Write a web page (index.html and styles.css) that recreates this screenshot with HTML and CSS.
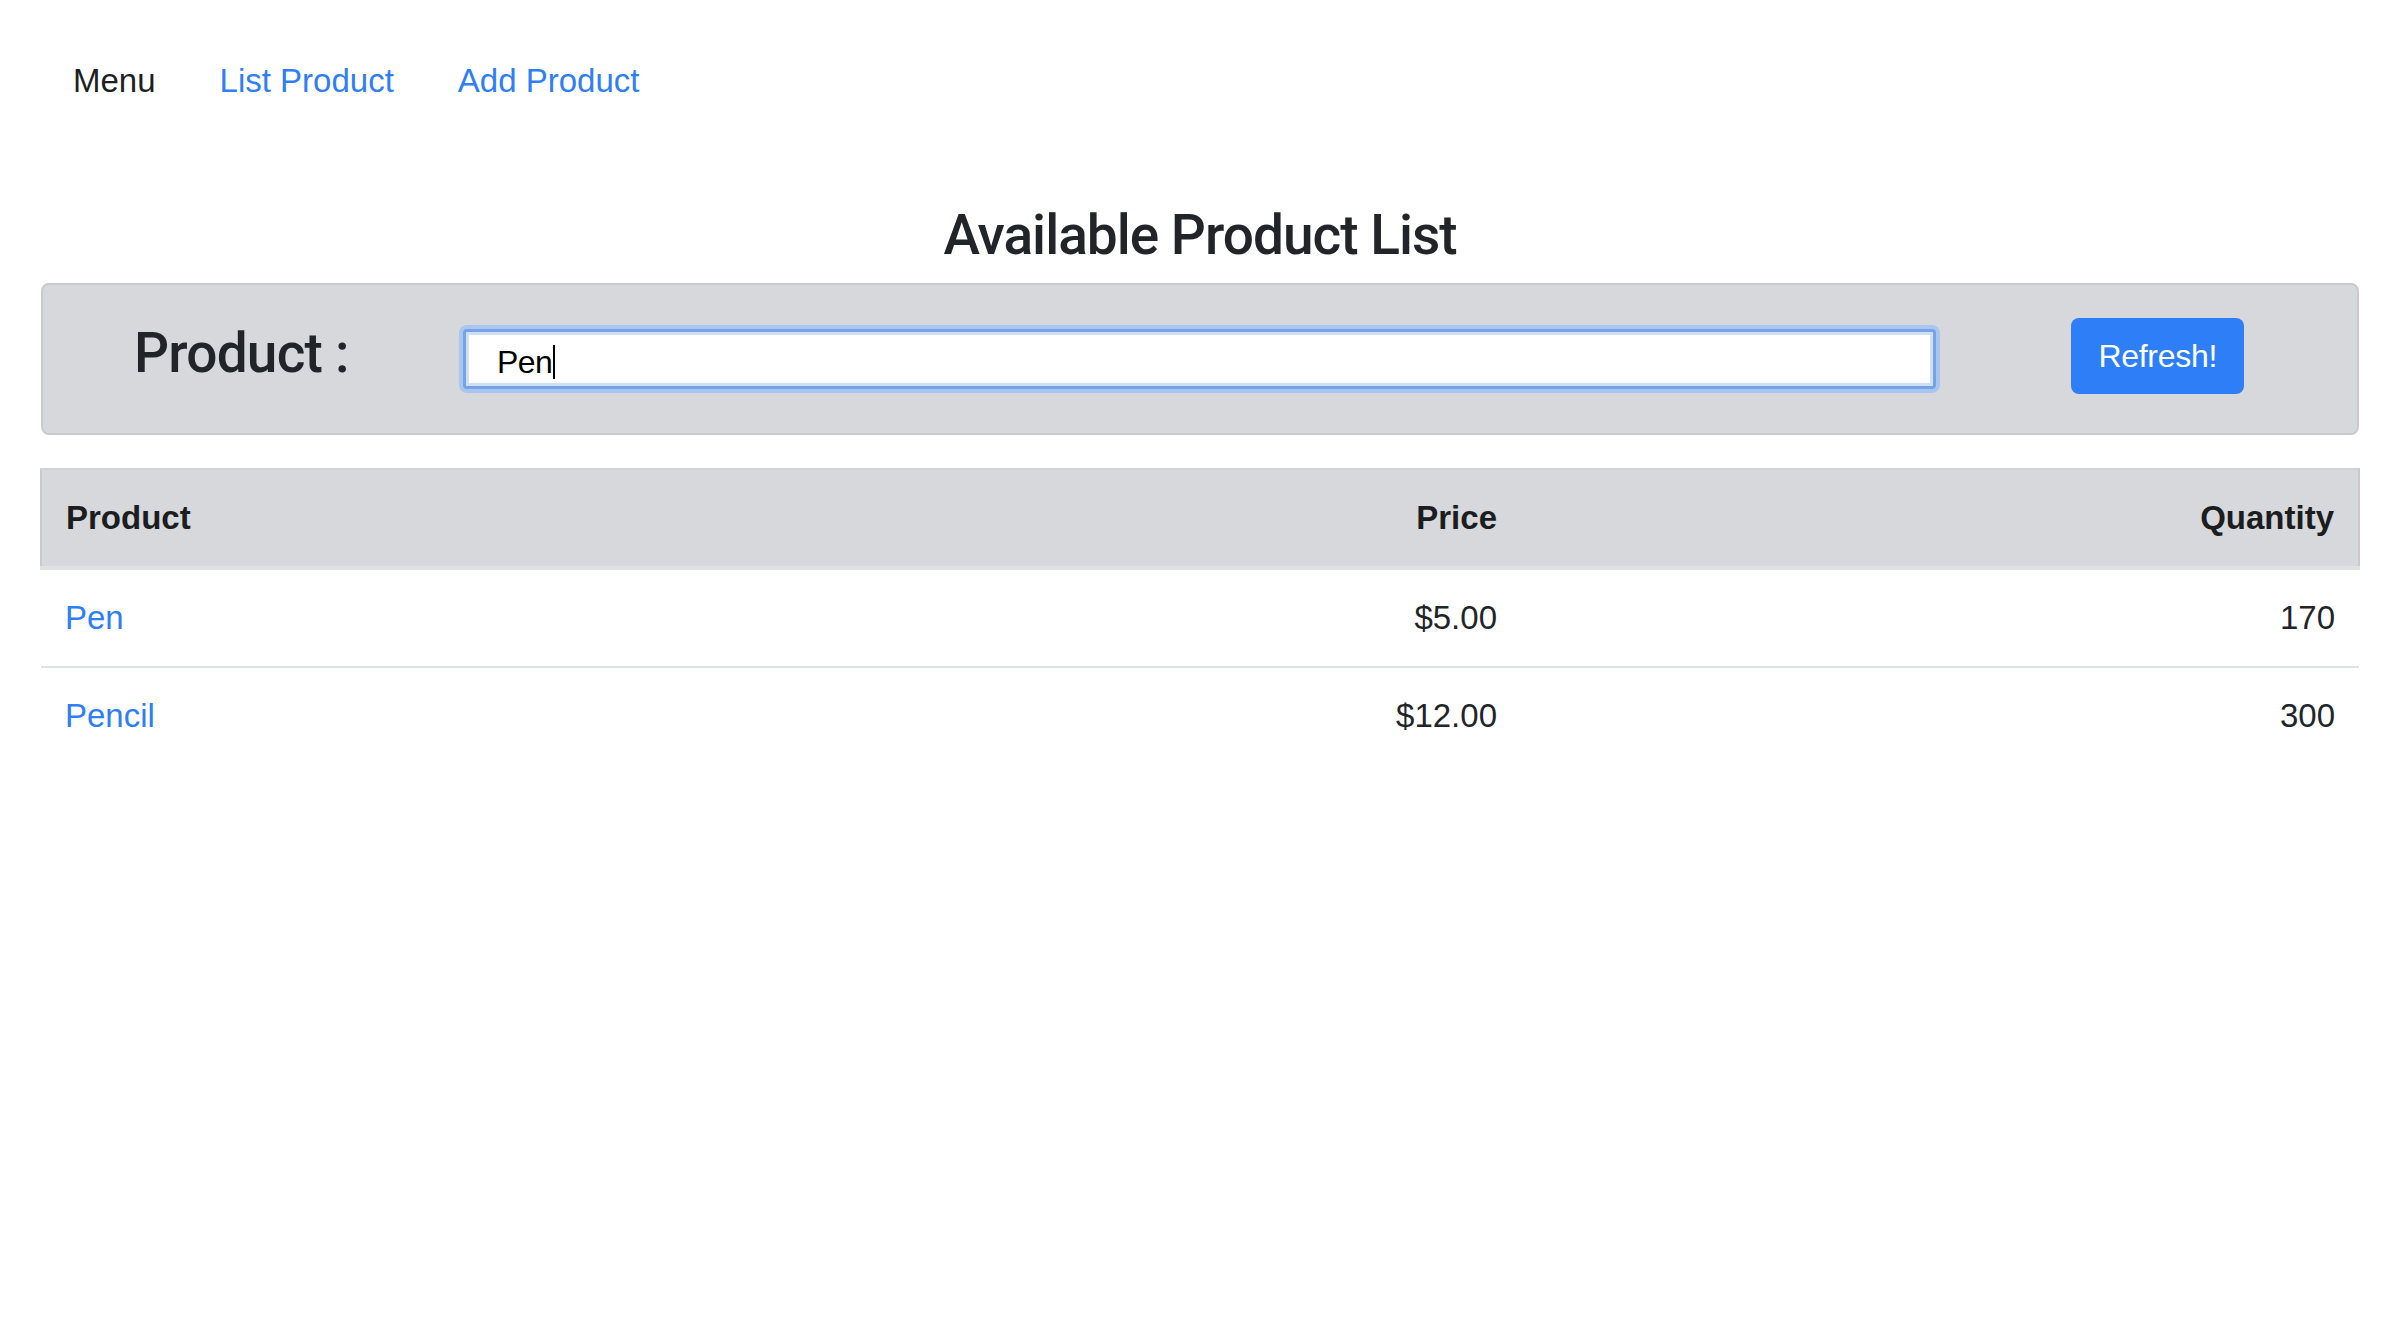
FILE: index.html
```html
<!DOCTYPE html>
<html lang="en">
<head>
<meta charset="utf-8">
<title>Available Product List</title>
<link rel="stylesheet" href="styles.css">
</head>
<body>
<div class="page">
  <nav class="nav">
    <span class="nav-item nav-text">Menu</span>
    <a class="nav-item nav-link" href="#">List Product</a>
    <a class="nav-item nav-link" href="#">Add Product</a>
  </nav>

  <h1 class="title">Available Product List</h1>

  <section class="search-panel">
    <label class="search-label">Product :</label>
    <div class="search-field" role="textbox">Pen<span class="caret"></span></div>
    <button class="btn-refresh" type="button">Refresh!</button>
  </section>

  <table class="product-table">
    <colgroup>
      <col class="col-product">
      <col class="col-price">
      <col class="col-qty">
    </colgroup>
    <thead>
      <tr>
        <th class="cell-left">Product</th>
        <th class="cell-right">Price</th>
        <th class="cell-right">Quantity</th>
      </tr>
    </thead>
    <tbody>
      <tr>
        <td class="cell-left"><a class="table-link" href="#">Pen</a></td>
        <td class="cell-right">$5.00</td>
        <td class="cell-right">170</td>
      </tr>
      <tr>
        <td class="cell-left"><a class="table-link" href="#">Pencil</a></td>
        <td class="cell-right">$12.00</td>
        <td class="cell-right">300</td>
      </tr>
    </tbody>
  </table>
</div>
</body>
</html>
```

FILE: styles.css
```css
* {
  box-sizing: border-box;
}

html, body {
  margin: 0;
  padding: 0;
  background: #ffffff;
}

body {
  font-family: "Liberation Sans", Arial, sans-serif;
  font-size: 33px;
  line-height: 48px;
  color: #212529;
}

.page {
  padding: 41px 40px 0 40px;
}

/* Navigation */
.nav {
  display: flex;
  align-items: center;
  padding-left: 1px;
}

.nav-item {
  padding: 16px 32px;
  text-decoration: none;
}

.nav-text {
  color: #1d1f22;
}

.nav-link {
  color: #2f7ef6;
}

/* Title */
.title {
  margin: 80px 0 14px 0;
  font-family: Roboto, "Liberation Sans", sans-serif;
  font-weight: 500;
  font-size: 55px;
  letter-spacing: -1px;
  line-height: 68px;
  text-align: center;
  color: #212529;
}

/* Search panel */
.search-panel {
  display: flex;
  align-items: center;
  height: 152px;
  margin: 0 1px;
  padding-left: 91px;
  background: #d6d8db;
  border: 2px solid #c8cacd;
  border-radius: 8px;
}

.search-label {
  flex: none;
  width: 329px;
  margin-bottom: 12px;
  font-family: Roboto, "Liberation Sans", sans-serif;
  font-weight: 500;
  font-size: 55px;
  letter-spacing: -0.8px;
  line-height: 68px;
  color: #212529;
}

.search-field {
  flex: 1;
  display: flex;
  align-items: center;
  height: 60px;
  padding: 5px 31px 0 31px;
  background: #ffffff;
  border: 3px solid #76a2e8;
  border-radius: 4px;
  box-shadow: 0 0 0 4px #a9c6f1, inset 0 0 0 3px #cfdff8;
  font-size: 32px;
  letter-spacing: -0.6px;
  line-height: 48px;
  color: #000000;
}

.caret {
  display: inline-block;
  width: 2px;
  height: 34px;
  margin-left: 1px;
  background: #000000;
  vertical-align: -5px;
}

.btn-refresh {
  flex: none;
  height: 76px;
  margin: 0 113px 6px 135px;
  padding: 0 27px;
  border: 0;
  border-radius: 8px;
  background: #2e7ff7;
  color: #ffffff;
  font-family: "Liberation Sans", Arial, sans-serif;
  font-size: 32px;
  letter-spacing: -0.3px;
  line-height: 48px;
}

/* Table */
.product-table {
  width: 100%;
  margin-top: 33px;
  border-collapse: collapse;
  table-layout: fixed;
}

.col-product {
  width: 740px;
}

.col-price {
  width: 740px;
}

.product-table th,
.product-table td {
  padding: 24px;
  line-height: 48px;
}

.product-table thead th {
  background: #d6d8db;
  border-top: 2px solid #d0d2d5;
  border-bottom: 4px solid #dee2e6;
  font-weight: 700;
  color: #1b1d20;
}

.product-table thead th:first-child {
  border-left: 2px solid #c8cacd;
}

.product-table thead th:last-child {
  border-right: 2px solid #c8cacd;
}

.product-table tbody td {
  border-top: 2px solid #dee2e6;
}

.cell-left {
  text-align: left;
}

.cell-right {
  text-align: right;
}

.table-link {
  color: #2f7ef6;
  text-decoration: none;
}
```
